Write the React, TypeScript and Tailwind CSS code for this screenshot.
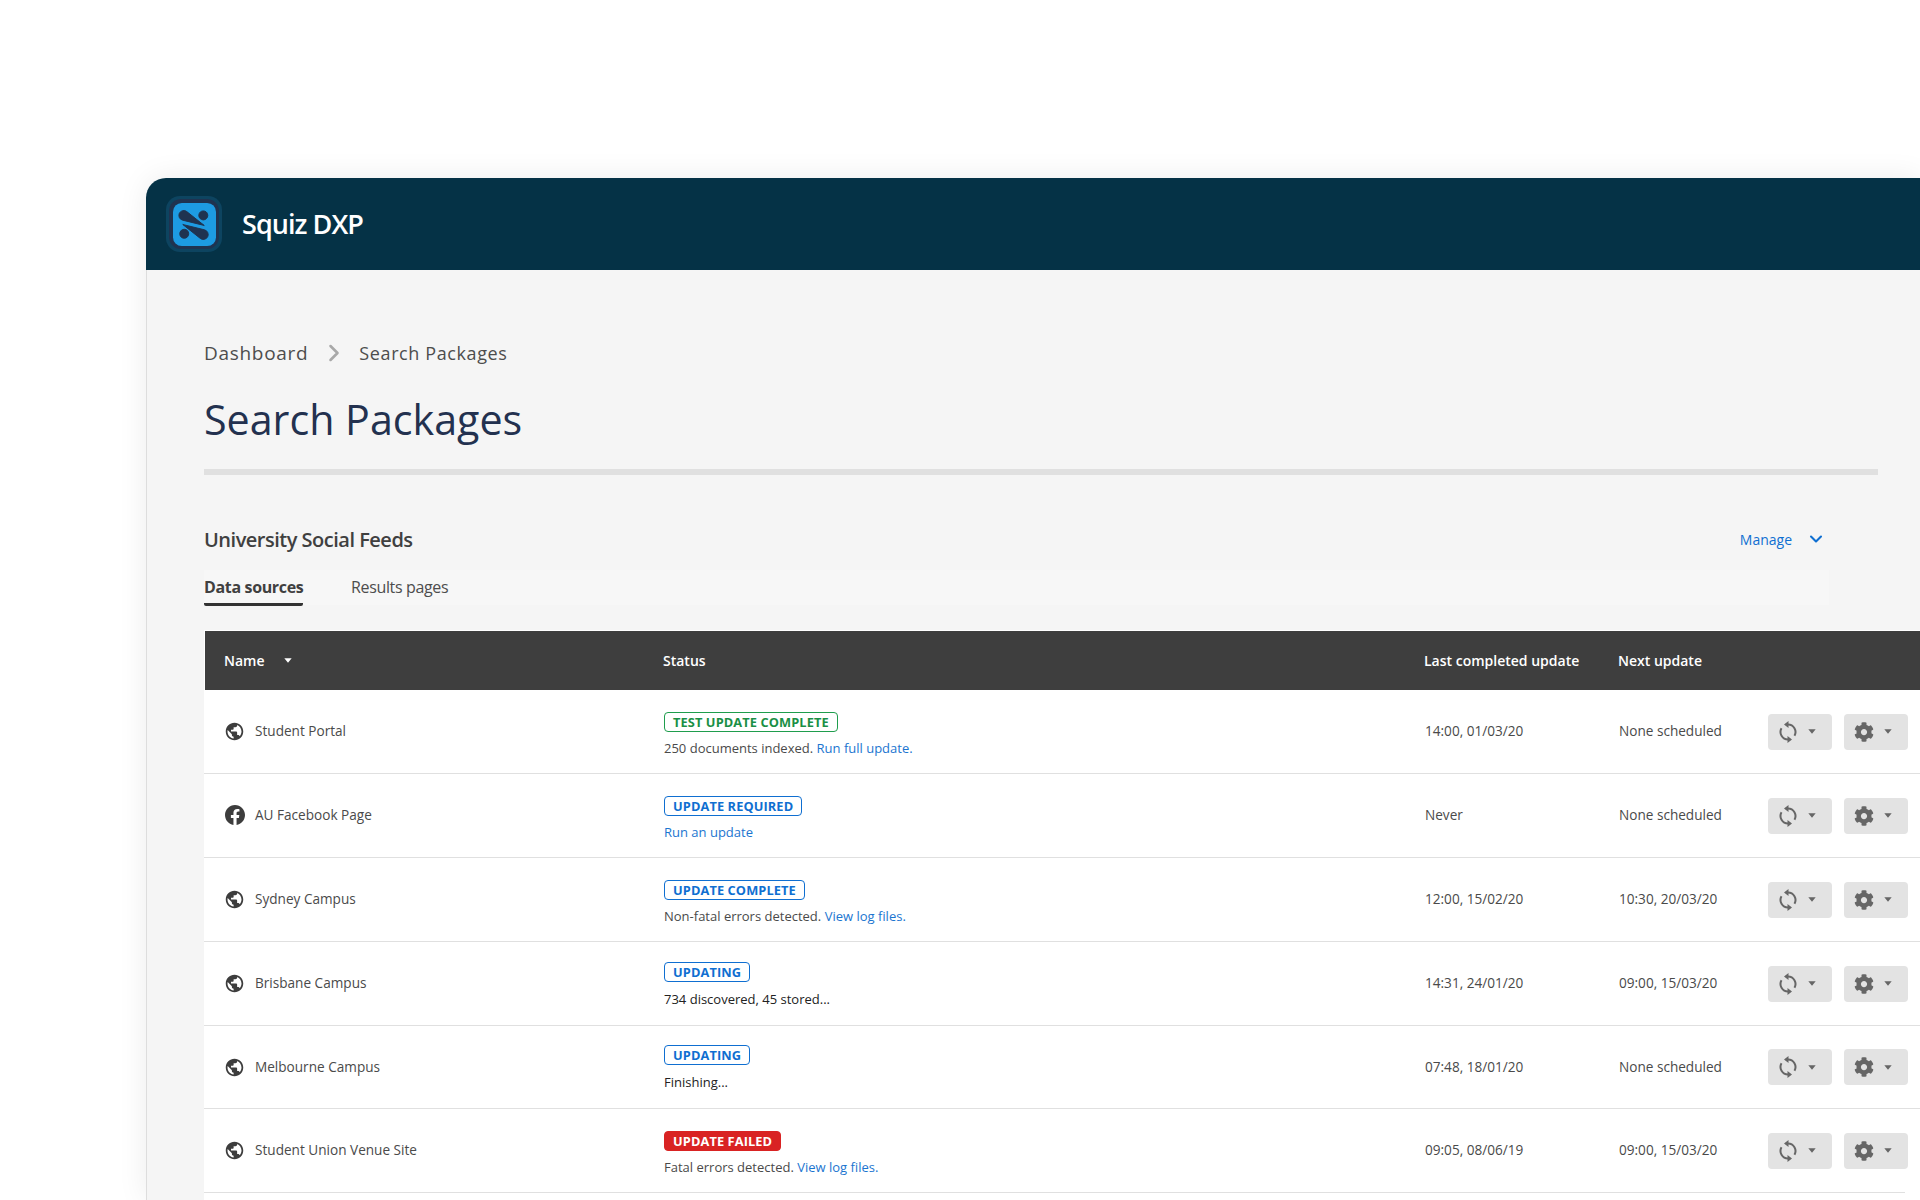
import { ChevronDown, ChevronRight } from "lucide-react";
import { FaCog } from "react-icons/fa";

const FONT = "[font-family:'Open_Sans',sans-serif]";

const ROWS = [
  {
    name: "Student Portal",
    icon: "globe",
    badge: "TEST UPDATE COMPLETE",
    tone: "green",
    note: "250 documents indexed.",
    link: "Run full update.",
    last: "14:00, 01/03/20",
    next: "None scheduled",
    height: "h-[84px]",
    pad: "pt-[6px]",
  },
  {
    name: "AU Facebook Page",
    icon: "facebook",
    badge: "UPDATE REQUIRED",
    tone: "blue",
    note: "",
    link: "Run an update",
    last: "Never",
    next: "None scheduled",
    height: "h-[84px]",
    pad: "pt-[6px]",
  },
  {
    name: "Sydney Campus",
    icon: "globe",
    badge: "UPDATE COMPLETE",
    tone: "blue",
    note: "Non-fatal errors detected.",
    link: "View log files.",
    last: "12:00, 15/02/20",
    next: "10:30, 20/03/20",
    height: "h-[84px]",
    pad: "pt-[6px]",
  },
  {
    name: "Brisbane Campus",
    icon: "globe",
    badge: "UPDATING",
    tone: "blue",
    dark: true,
    note: "734 discovered, 45 stored...",
    link: "",
    last: "14:31, 24/01/20",
    next: "09:00, 15/03/20",
    height: "h-[84px]",
    pad: "pt-[3px]",
  },
  {
    name: "Melbourne Campus",
    icon: "globe",
    badge: "UPDATING",
    tone: "blue",
    dark: true,
    note: "Finishing...",
    link: "",
    last: "07:48, 18/01/20",
    next: "None scheduled",
    height: "h-[83px]",
    pad: "pt-[2px]",
  },
  {
    name: "Student Union Venue Site",
    icon: "globe",
    badge: "UPDATE FAILED",
    tone: "red",
    note: "Fatal errors detected.",
    link: "View log files.",
    last: "09:05, 08/06/19",
    next: "09:00, 15/03/20",
    height: "h-[83px]",
    pad: "pt-[6px]",
  },
];

const BADGE_TONES: Record<string, string> = {
  green: "border-[#1f9d4d] text-[#1a8f45] bg-white",
  blue: "border-[#0f6fd1] text-[#0f6fd1] bg-white",
  red: "border-[#d92323] text-white bg-[#d92323]",
};

function Globe() {
  return (
    <svg viewBox="0 0 24 24" className="w-[21px] h-[21px] fill-[#3d3d3d]">
      <path d="M12 2C6.48 2 2 6.48 2 12s4.48 10 10 10 10-4.48 10-10S17.52 2 12 2zm-1 17.93c-3.95-.49-7-3.85-7-7.93 0-.62.08-1.21.21-1.79L9 15v1c0 1.1.9 2 2 2v1.93zm6.9-2.54c-.26-.81-1-1.39-1.9-1.39h-1v-3c0-.55-.45-1-1-1H8v-2h2c.55 0 1-.45 1-1V7h2c1.1 0 2-.9 2-2v-.41c2.93 1.19 5 4.06 5 7.41 0 2.08-.8 3.97-2.1 5.39z" />
    </svg>
  );
}

function Facebook() {
  return (
    <svg viewBox="0 0 24 24" className="w-[20px] h-[20px] fill-[#3d3d3d]">
      <path d="M24 12.07C24 5.4 18.63 0 12 0S0 5.4 0 12.07c0 6.03 4.39 11.02 10.13 11.93v-8.44H7.08v-3.49h3.05V9.41c0-3.02 1.79-4.69 4.53-4.69 1.31 0 2.68.24 2.68.24v2.97h-1.51c-1.49 0-1.96.93-1.96 1.88v2.26h3.33l-.53 3.49h-2.8V24C19.61 23.09 24 18.1 24 12.07z" />
    </svg>
  );
}

function Caret({ className }: { className: string }) {
  return (
    <svg viewBox="0 0 8 5" className={`w-[8px] h-[5px] ${className}`}>
      <path d="M0.3 0.3h7.4L4 4.7z" />
    </svg>
  );
}

function SyncIcon() {
  return (
    <svg viewBox="0 0 18 22" className="w-[18px] h-[22px]">
      <path d="M9 3.5A7.5 7.5 0 0 1 15.5 14.7M9 18.5A7.5 7.5 0 0 1 2.5 7.3" fill="none" stroke="#666666" strokeWidth="2" />
      <path d="M9.5 0L9.5 7L5 3.5zM8.5 15L8.5 22L13 18.5z" fill="#666666" />
    </svg>
  );
}

function Logo() {
  return (
    <div className="w-[56px] h-[56px] rounded-[14px] bg-[#0d4460] flex items-center justify-center">
      <div className="w-[50px] h-[50px] rounded-[12px] bg-[#1f3350] flex items-center justify-center">
        <svg viewBox="0 0 44 44" className="w-[43px] h-[43px]">
          <rect width="44" height="44" rx="9" fill="#1d9be2" />
          <g fill="#1f3350" stroke="#1f3350" strokeLinejoin="round" strokeWidth="1">
            <path d="M32 23L14.11 8.79A5 5 0 1 0 9.82 17.56Z" />
            <path d="M32 23L14.11 8.79A5 5 0 1 0 9.82 17.56Z" transform="rotate(180 21 22.5)" />
            <circle cx="31" cy="12.7" r="4.6" />
            <circle cx="11.5" cy="31.5" r="4.6" />
          </g>
        </svg>
      </div>
    </div>
  );
}

function Row({ row, last }: { row: (typeof ROWS)[number]; last?: boolean }) {
  return (
    <div className={`flex ${row.height} shrink-0 items-center bg-white text-[13.6px] text-[#4a4a4a] ${last ? "" : "border-b border-[#e0e0e0]"}`}>
      <div className="w-[460px] pl-[20px] flex items-center">
        <span className="w-[21px] flex justify-center">
          {row.icon === "facebook" ? <Facebook /> : <Globe />}
        </span>
        <span className="ml-[10px]">{row.name}</span>
      </div>
      <div className={`w-[760px] ${row.pad}`}>
        <div
          className={`inline-block align-top border rounded-[4px] px-[8px] h-[20px] leading-[18px] text-[12.8px] font-bold tracking-[0.1px] ${BADGE_TONES[row.tone]}`}
        >
          {row.badge}
        </div>
        <div className={`mt-[7px] text-[13px] leading-[18px] ${row.dark ? "text-[#222222]" : ""}`}>
          {row.note}
          {row.note && row.link ? " " : ""}
          {row.link && <span className="text-[#1b75d0]">{row.link}</span>}
        </div>
      </div>
      <div className="w-[194px] pl-[1px]">{row.last}</div>
      <div className="w-[150px] pl-[1px]">{row.next}</div>
      <div className="flex gap-[12px]">
        <div className="w-[64px] h-[36px] rounded-[4px] bg-[#e3e3e3] flex items-center pl-[11px] gap-[11px]">
          <SyncIcon />
          <Caret className="fill-[#666666]" />
        </div>
        <div className="w-[64px] h-[36px] rounded-[4px] bg-[#e3e3e3] flex items-center pl-[10px] gap-[10px]">
          <FaCog className="w-[20px] h-[20px] text-[#666666]" />
          <Caret className="fill-[#666666]" />
        </div>
      </div>
    </div>
  );
}

export default function App() {
  return (
    <div className={`h-[1200px] overflow-hidden bg-white pt-[178px] pl-[146px] ${FONT}`}>
      <div className="w-[1774px] h-[1022px] flex flex-col rounded-tl-[20px] overflow-hidden bg-[#f5f5f5] shadow-[0_0_30px_rgba(0,0,0,0.08)]">
        {/* Top bar */}
        <div className="h-[92px] shrink-0 bg-[#053246] flex items-center pl-[20px]">
          <Logo />
          <span className="ml-[20px] text-[27px] font-semibold text-white tracking-[-0.95px]">
            Squiz DXP
          </span>
        </div>

        <div className="pl-[57px] flex flex-col flex-1 border-l border-[#dddddd]">
          {/* Breadcrumb */}
          <div className="mt-[71px] h-[24px] flex items-center text-[#4d4d4d] text-[19px] tracking-[0.7px]">
            <span>Dashboard</span>
            <ChevronRight className="w-[28px] h-[28px] ml-[12px] mr-[11px] text-[#a8a8a8]" strokeWidth={2.2} />
            <span className="text-[18px] tracking-[0.6px]">Search Packages</span>
          </div>

          <h1 className="mt-[26px] text-[41.2px] leading-[56px] text-[#23314f]">Search Packages</h1>
          <div className="mt-[22px] mr-[42px] h-[6px] bg-[#e0e0e0]" />

          {/* Section heading */}
          <div className="mt-[50px] mr-[42px] flex items-center justify-between">
            <h2 className="text-[20px] leading-[30px] font-semibold text-[#404040] tracking-[-0.5px]">
              University Social Feeds
            </h2>
            <div className="flex items-center pb-[2px] text-[14px] text-[#0f6fd1] mr-[52px]">
              <span>Manage</span>
              <ChevronDown className="ml-[14px] w-[20px] h-[20px]" strokeWidth={2.5} />
            </div>
          </div>

          {/* Tabs */}
          <div className="mt-[15px] w-[1625px] h-[35px] bg-[#f7f7f7] flex text-[16px] tracking-[-0.35px]">
            <div className="w-[99px] h-[36px] border-b-[3px] border-[#333333] rounded-b-[2px] font-bold text-[#404040] leading-[34px] whitespace-nowrap">
              Data sources
            </div>
            <div className="ml-[48px] text-[#4d4d4d] leading-[34px]">Results pages</div>
          </div>

          {/* Table */}
          <div className="mt-[25px] flex flex-col flex-1">
            <div className="flex h-[60px] shrink-0 items-center bg-[#3e3e3e] border-t border-l border-white text-white text-[14px] font-semibold">
              <div className="w-[458px] pl-[19px] flex items-center">
                Name
                <Caret className="fill-white ml-[19px]" />
              </div>
              <div className="w-[761px]">Status</div>
              <div className="w-[194px]">Last completed update</div>
              <div>Next update</div>
            </div>
            {ROWS.map((row, i) => (
              <Row key={row.name} row={row} last={i === ROWS.length - 1} />
            ))}
            <div className="flex-1 bg-white">
              <div className="mr-[15px] h-px bg-[#e0e0e0]" />
            </div>
          </div>
        </div>
      </div>
    </div>
  );
}
